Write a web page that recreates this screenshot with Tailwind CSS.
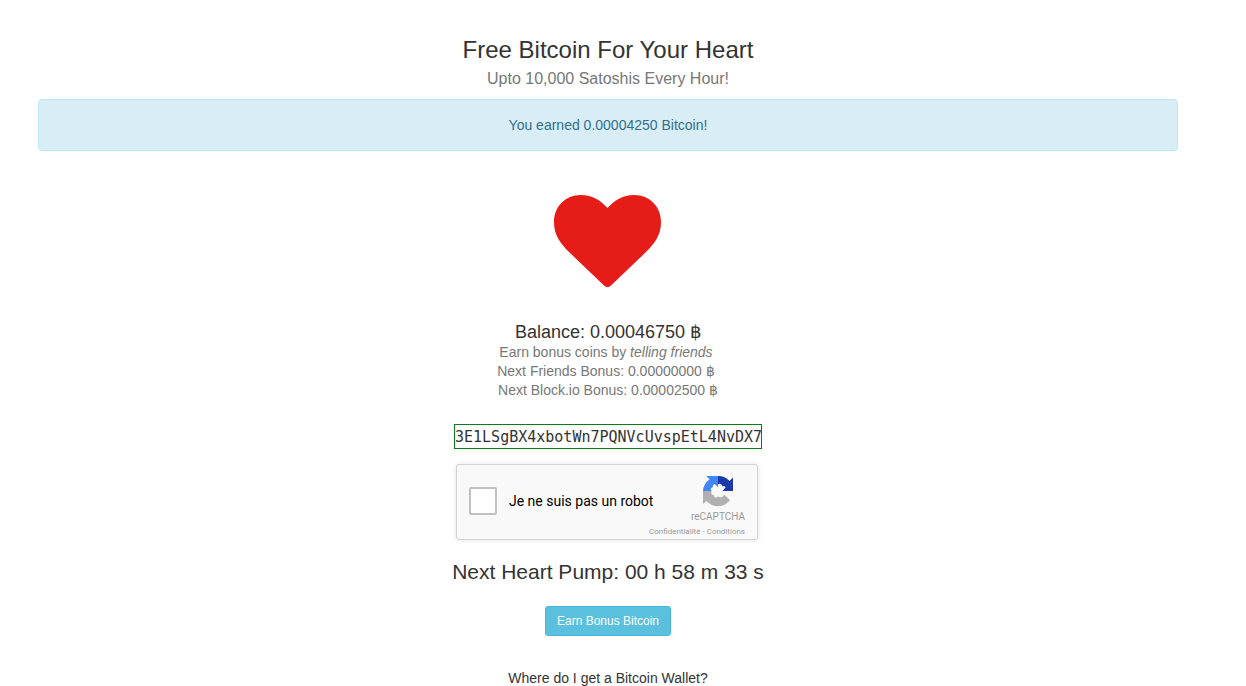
<!DOCTYPE html>
<html lang="en">
<head>
    <meta charset="UTF-8">
    <meta name="viewport" content="width=device-width, initial-scale=1.0">
    <title>Free Bitcoin For Your Heart</title>
    <script src="https://cdn.jsdelivr.net/npm/@tailwindcss/browser@4"></script>
</head>
<body class="bg-white pr-[30px] font-['Liberation_Sans',Arial,sans-serif] text-sm text-[#333333]">

    <main class="mx-auto flex max-w-[1140px] flex-col items-center pt-9 text-center">
        <!-- Title -->
        <h1 class="text-2xl leading-7">Free Bitcoin For Your Heart</h1>
        <p class="mt-[5px] text-base leading-5 text-[#777777]">Upto 10,000 Satoshis Every Hour!</p>

        <!-- Alert -->
        <div role="alert" class="mt-[10px] w-full rounded border border-[#bce8f1] bg-[#d9edf7] p-[15px] leading-5 text-[#31708f]">You earned 0.00004250 Bitcoin!</div>

        <!-- Heart -->
        <svg class="mt-11 h-[93px] w-[108px]" viewBox="0 0 108 93" fill="#e51c17" role="img" aria-label="Heart">
            <path d="M53.500 13C61 5 69 0 80 0C96 0 107 12 107 27C107 40 101 48 92 57L57 90.500Q53.500 94 50 90.500L15 57C6 48 0 40 0 27C0 12 11 0 27 0C38 0 46 5 53.500 13Z"/>
        </svg>

        <!-- Balance -->
        <h2 class="mt-[34px] text-lg leading-5">Balance: 0.00046750 ฿</h2>
        <div class="mt-px leading-[19px] text-[#777777]">
            <p class="pr-1">Earn bonus coins by <a href="#" class="italic">telling friends</a></p>
            <p class="pr-1">Next Friends Bonus: 0.00000000 ฿</p>
            <p>Next Block.io Bonus: 0.00002500 ฿</p>
        </div>

        <input type="text" aria-label="Bitcoin address" value="3E1LSgBX4xbotWn7PQNVcUvspEtL4NvDX7" class="mt-6 h-[25px] w-[308px] border border-[#0a7a1a] text-center font-['DejaVu_Sans_Mono',monospace] text-[15px]">

        <!-- reCAPTCHA -->
        <div class="mt-[15px] mr-[2px] flex h-[76px] w-[302px] rounded-[3px] border border-[#d3d3d3] bg-[#f9f9f9] px-3 font-[Roboto,sans-serif] shadow-[0_0_4px_1px_rgba(0,0,0,0.08)]">
            <div class="flex shrink-0 items-center gap-3 pb-[2px]">
                <input type="checkbox" id="robot" class="size-7 appearance-none rounded-[2px] border-2 border-[#c1c1c1] bg-white">
                <label for="robot" class="text-sm whitespace-nowrap text-black">Je ne suis pas un robot</label>
            </div>
            <div class="flex min-w-0 flex-1 flex-col items-end pt-[10px] text-[#999999]">
                <svg class="mr-[11px] size-8" viewBox="0 0 32 32" aria-hidden="true">
                    <path fill="#1c3aa9" d="M31 16V2.500L27.500 6A15 15 0 0 0 16 1V9.500C17.500 8 20 9 20.500 11.500C22 11 23.500 11.500 23.500 12.500L20.500 16Z"/>
                    <path fill="#4285f4" d="M16 1H4.500L7.500 4.500A15 15 0 0 0 1 16H9.500C8 14.500 9 12.500 11 12C10.500 10.500 11.500 9 12.500 9L16 12Z"/>
                    <path fill="#b0b0b0" d="M1 16V29L4.500 26A15 15 0 0 0 28 25L22 19.500C21 22.500 18 23 16.500 21.500C14.500 23.500 11.500 22.500 12 20C9.500 20 8.500 17.500 10 16Z"/>
                </svg>
                <span class="mt-1 text-[10px] leading-3">reCAPTCHA</span>
                <span class="mt-1 text-[8px] leading-[10px] whitespace-nowrap"><a href="#">Confidentialité</a> - <a href="#">Conditions</a></span>
            </div>
        </div>

        <!-- Countdown -->
        <h2 class="mt-5 text-[21px] leading-6">Next Heart Pump: 00 h 58 m 33 s</h2>
        <button type="button" class="mt-[22px] h-[30px] rounded-[3px] border border-[#46b8da] bg-[#5bc0de] px-[11px] text-xs text-white">Earn Bonus Bitcoin</button>

        <a href="#" class="mt-8 leading-5">Where do I get a Bitcoin Wallet?</a>
    </main>

</body>
</html>
